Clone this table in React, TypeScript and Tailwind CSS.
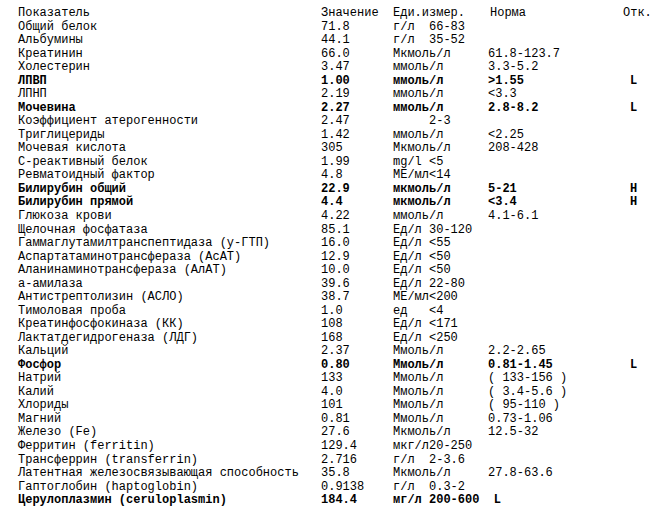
type Row = {
  name: string;
  value: string;
  unit: string;
  norm?: string;
  flag?: string;
  bold?: boolean;
};

const rows: Row[] = [
  { name: "Общий белок", value: "71.8", unit: "г/л  66-83" },
  { name: "Альбумины", value: "44.1", unit: "г/л  35-52" },
  { name: "Креатинин", value: "66.0", unit: "Мкмоль/л", norm: "61.8-123.7" },
  { name: "Холестерин", value: "3.47", unit: "ммоль/л", norm: "3.3-5.2" },
  { name: "ЛПВП", value: "1.00", unit: "ммоль/л", norm: ">1.55", flag: "L", bold: true },
  { name: "ЛПНП", value: "2.19", unit: "ммоль/л", norm: "<3.3" },
  { name: "Мочевина", value: "2.27", unit: "ммоль/л", norm: "2.8-8.2", flag: "L", bold: true },
  { name: "Коэффициент атерогенности", value: "2.47", unit: "     2-3" },
  { name: "Триглицериды", value: "1.42", unit: "ммоль/л", norm: "<2.25" },
  { name: "Мочевая кислота", value: "305", unit: "Мкмоль/л", norm: "208-428" },
  { name: "С-реактивный белок", value: "1.99", unit: "mg/l <5" },
  { name: "Ревматоидный фактор", value: "4.8", unit: "МЕ/мл<14" },
  { name: "Билирубин общий", value: "22.9", unit: "мкмоль/л", norm: "5-21", flag: "H", bold: true },
  { name: "Билирубин прямой", value: "4.4", unit: "мкмоль/л", norm: "<3.4", flag: "H", bold: true },
  { name: "Глюкоза крови", value: "4.22", unit: "ммоль/л", norm: "4.1-6.1" },
  { name: "Щелочная фосфатаза", value: "85.1", unit: "Ед/л 30-120" },
  { name: "Гаммаглутамилтранспептидаза (у-ГТП)", value: "16.0", unit: "Ед/л <55" },
  { name: "Аспартатаминотрансфераза (АсАТ)", value: "12.9", unit: "Ед/л <50" },
  { name: "Аланинаминотрансфераза (АлАТ)", value: "10.0", unit: "Ед/л <50" },
  { name: "а-амилаза", value: "39.6", unit: "Ед/л 22-80" },
  { name: "Антистрептолизин (АСЛО)", value: "38.7", unit: "МЕ/мл<200" },
  { name: "Тимоловая проба", value: "1.0", unit: "ед   <4" },
  { name: "Креатинфосфокиназа (КК)", value: "108", unit: "Ед/л <171" },
  { name: "Лактатдегидрогеназа (ЛДГ)", value: "168", unit: "Ед/л <250" },
  { name: "Кальций", value: "2.37", unit: "Ммоль/л", norm: "2.2-2.65" },
  { name: "Фосфор", value: "0.80", unit: "Ммоль/л", norm: "0.81-1.45", flag: "L", bold: true },
  { name: "Натрий", value: "133", unit: "Ммоль/л", norm: "( 133-156 )" },
  { name: "Калий", value: "4.0", unit: "Ммоль/л", norm: "( 3.4-5.6 )" },
  { name: "Хлориды", value: "101", unit: "Ммоль/л", norm: "( 95-110 )" },
  { name: "Магний", value: "0.81", unit: "Ммоль/л", norm: "0.73-1.06" },
  { name: "Железо (Fe)", value: "27.6", unit: "Мкмоль/л", norm: "12.5-32" },
  { name: "Ферритин (ferritin)", value: "129.4", unit: "мкг/л20-250" },
  { name: "Трансферрин (transferrin)", value: "2.716", unit: "г/л  2-3.6" },
  { name: "Латентная железосвязывающая способность", value: "35.8", unit: "Мкмоль/л", norm: "27.8-63.6" },
  { name: "Гаптоглобин (haptoglobin)", value: "0.9138", unit: "г/л  0.3-2" },
  { name: "Церулоплазмин (ceruloplasmin)", value: "184.4", unit: "мг/л 200-600  L", bold: true },
];

function Line({ row }: { row: Row }) {
  return (
    <div className={`flex whitespace-pre ${row.bold ? "font-bold" : ""}`}>
      <span className="w-[303px] shrink-0">{row.name}</span>
      <span className="w-[72px] shrink-0">{row.value}</span>
      <span className="w-[95px] shrink-0">{row.unit}</span>
      <span className="w-[135px] shrink-0">{row.norm ?? ""}</span>
      <span className="pl-[7px]">{row.flag ?? ""}</span>
    </div>
  );
}

export default function App() {
  return (
    <div className="w-[668px] h-[514px] bg-white text-black pl-[18px] pt-[7px] font-['Liberation_Mono',monospace] text-[12px] leading-[13.53px]">
      <div className="flex whitespace-pre">
        <span className="w-[303px] shrink-0">Показатель</span>
        <span className="w-[72px] shrink-0">Значение</span>
        <span className="w-[97px] shrink-0">Еди.измер.</span>
        <span className="w-[133px] shrink-0">Норма</span>
        <span>Отк.</span>
      </div>
      {rows.map((r) => (
        <Line key={r.name} row={r} />
      ))}
    </div>
  );
}
